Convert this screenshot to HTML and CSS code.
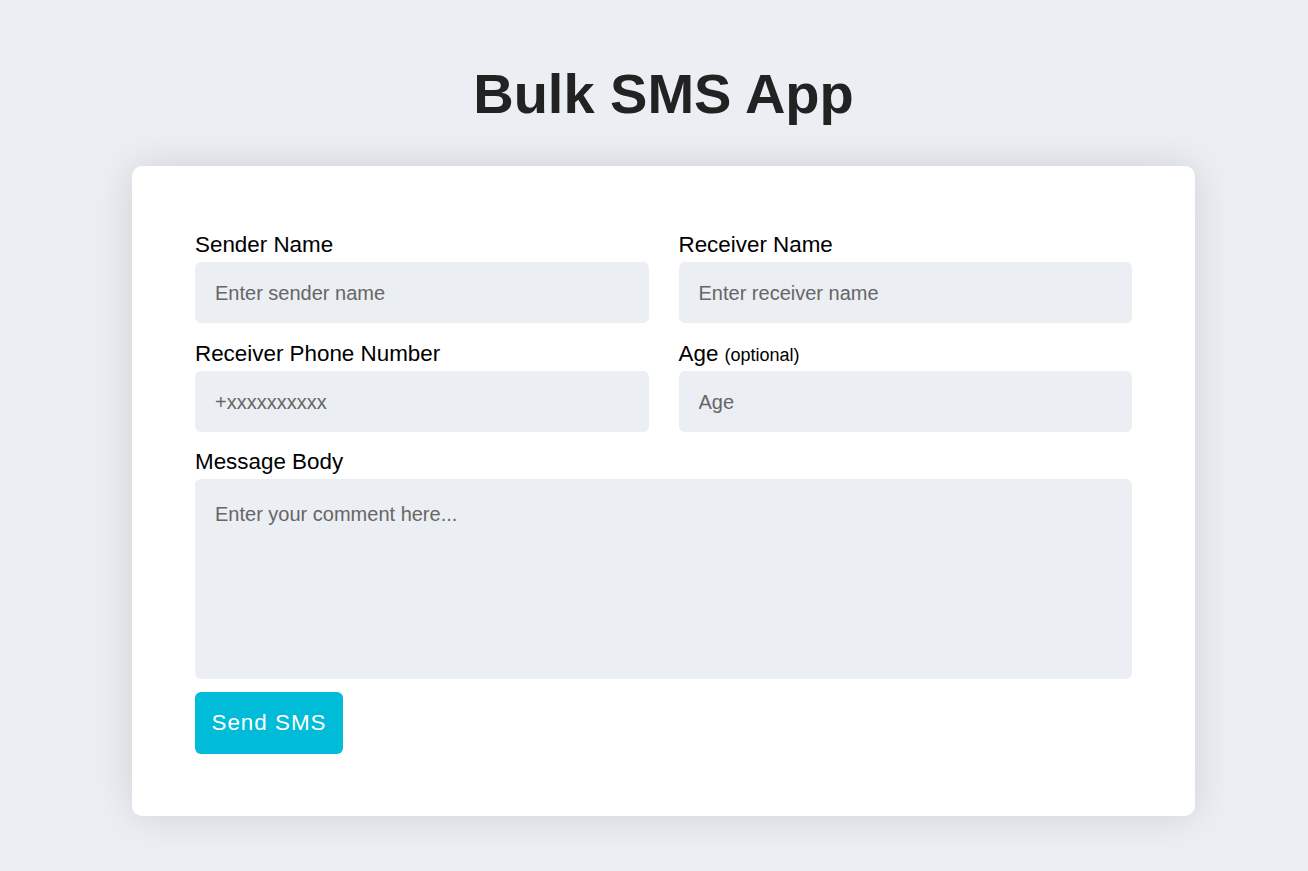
FILE: index.html
```html
<!DOCTYPE html>
<html lang="en">
<head>
<meta charset="utf-8">
<title>Bulk SMS App</title>
<link rel="stylesheet" href="styles.css">
</head>
<body>
<div class="page">
  <h1 class="title">Bulk SMS App</h1>
  <form class="card">
    <div class="grid">
      <div class="field">
        <label class="label">Sender Name</label>
        <input class="input" type="text" placeholder="Enter sender name">
      </div>
      <div class="field">
        <label class="label">Receiver Name</label>
        <input class="input" type="text" placeholder="Enter receiver name">
      </div>
      <div class="field">
        <label class="label">Receiver Phone Number</label>
        <input class="input" type="text" placeholder="+xxxxxxxxxx">
      </div>
      <div class="field">
        <label class="label">Age <span class="small">(optional)</span></label>
        <input class="input" type="text" placeholder="Age">
      </div>
      <div class="field full">
        <label class="label">Message Body</label>
        <textarea class="input textarea" placeholder="Enter your comment here..."></textarea>
      </div>
    </div>
    <button class="btn" type="button">Send SMS</button>
  </form>
</div>
</body>
</html>
```

FILE: styles.css
```css
* { box-sizing: border-box; }
html, body {
  margin: 0;
  background: #ebeef2;
  font-family: "Liberation Sans", Arial, sans-serif;
}
.page {
  padding: 61px 0 40px 19px;
}
.title {
  margin: 0 0 40px;
  text-align: center;
  font-size: 56px;
  font-weight: 700;
  color: #222222;
  line-height: normal;
}
.card {
  width: 1063px;
  margin: 0 auto;
  background: #ffffff;
  border-radius: 10px;
  box-shadow: 0 0 40px rgba(0, 0, 0, 0.12);
  padding: 66px 63px 62px;
}
.grid {
  display: grid;
  grid-template-columns: 1fr 1fr;
  column-gap: 30px;
  row-gap: 17.5px;
}
.field {
  display: flex;
  flex-direction: column;
  gap: 4px;
}
.full { grid-column: 1 / -1; }
.label {
  font-size: 22.4px;
  color: #000;
  line-height: normal;
}
.small { font-size: 18px; }
.input {
  height: 61px;
  border: none;
  border-radius: 6px;
  background: #ebeef2;
  padding: 2px 20px 0;
  font-family: "Liberation Sans", Arial, sans-serif;
  font-size: 20px;
  color: #222;
  outline: none;
}
.input::placeholder { color: #666; }
.textarea {
  height: 200px;
  padding: 24px 20px 20px;
  resize: none;
  line-height: normal;
}
.btn {
  margin-top: 13px;
  width: 148px;
  height: 62px;
  padding: 0;
  border: none;
  border-radius: 6px;
  background: #00bcd9;
  color: #fff;
  font-family: "Liberation Sans", Arial, sans-serif;
  font-size: 22.4px;
  letter-spacing: 1px;
  cursor: pointer;
}
```
